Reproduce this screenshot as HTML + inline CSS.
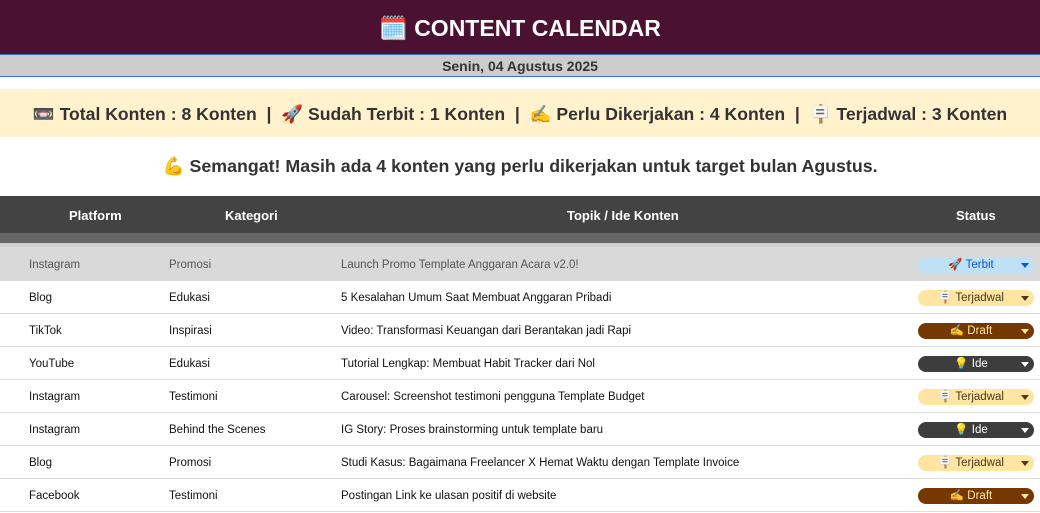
<!DOCTYPE html>
<html><head><meta charset="utf-8"><style>
*{margin:0;padding:0;box-sizing:border-box}
body{width:1040px;height:513px;overflow:hidden;background:#fff;font-family:"Liberation Sans","Noto Sans CJK JP",sans-serif;color:#222}
.hdr{height:55px;background:#4a1130;color:#fff;font-weight:bold;font-size:23px;text-align:center;line-height:56px;border-bottom:1px solid #3b6fd0}
.date{height:22px;background:#cccccc;border-bottom:1px solid #3b6fd0;text-align:center;font-weight:bold;font-size:14px;line-height:22px;color:#333}
.sum{position:absolute;top:89px;left:0;width:1040px;height:48px;background:#fff2cc;text-align:center;font-weight:bold;font-size:17.6px;line-height:50px;color:#333}
.mot{position:absolute;top:156px;width:1040px;text-align:center;font-weight:bold;font-size:17.8px;color:#333}
.th{position:absolute;top:196px;height:37px;width:1040px;background:#434343;color:#fff;font-weight:bold;font-size:13px}
.th span{position:absolute;top:12px}
.st1{position:absolute;top:233px;height:10px;width:1040px;background:#666}
.st2{position:absolute;top:243px;height:4px;width:1040px;background:#cfcfcf}
.row{position:absolute;left:0;width:1040px;height:33px;border-bottom:1px solid #ddd;font-size:11.5px;color:#111}
.row span{position:absolute;top:11px}
.b{position:absolute;left:918px;top:9px;width:116px;height:16px;border-radius:8px;font-size:11.5px;line-height:17px;text-align:center;padding-right:10px}
.b:after{content:"";position:absolute;right:5px;top:6px;border-left:4px solid transparent;border-right:4px solid transparent;border-top:5px solid currentColor}
.t{background:#bfe1f6;color:#0b57d0}.j{background:#ffe5a0;color:#473821}.d{background:#753800;color:#ffe5a0}.i{background:#3d3d3d;color:#fff}
</style></head><body>
<div class="hdr">🗓️ CONTENT CALENDAR</div>
<div class="date">Senin, 04 Agustus 2025</div>
<div class="sum">📼 Total Konten : 8 Konten &nbsp;|&nbsp; 🚀 Sudah Terbit : 1 Konten &nbsp;|&nbsp; ✍️ Perlu Dikerjakan : 4 Konten &nbsp;|&nbsp; 🪧 Terjadwal : 3 Konten</div>
<div class="mot">💪 Semangat! Masih ada 4 konten yang perlu dikerjakan untuk target bulan Agustus.</div>
<div class="th"><span style="left:69px">Platform</span><span style="left:225px">Kategori</span><span style="left:567px">Topik / Ide Konten</span><span style="left:956px">Status</span></div>
<div class="st1"></div><div class="st2"></div>
<div class="row" style="top:247px;height:34px;background:#d9d9d9;color:#555;border:none"><span style="left:29px;top:12px">Instagram</span><span style="left:169px;top:12px">Promosi</span><span style="left:341px;top:12px">Launch Promo Template Anggaran Acara v2.0!</span><div class="b t" style="top:10px">🚀 Terbit</div></div>
<div class="row" style="top:281px"><span style="left:29px">Blog</span><span style="left:169px">Edukasi</span><span style="left:341px">5 Kesalahan Umum Saat Membuat Anggaran Pribadi</span><div class="b j">🪧 Terjadwal</div></div>
<div class="row" style="top:314px"><span style="left:29px">TikTok</span><span style="left:169px">Inspirasi</span><span style="left:341px">Video: Transformasi Keuangan dari Berantakan jadi Rapi</span><div class="b d">✍️ Draft</div></div>
<div class="row" style="top:347px"><span style="left:29px">YouTube</span><span style="left:169px">Edukasi</span><span style="left:341px">Tutorial Lengkap: Membuat Habit Tracker dari Nol</span><div class="b i">💡 Ide</div></div>
<div class="row" style="top:380px"><span style="left:29px">Instagram</span><span style="left:169px">Testimoni</span><span style="left:341px">Carousel: Screenshot testimoni pengguna Template Budget</span><div class="b j">🪧 Terjadwal</div></div>
<div class="row" style="top:413px"><span style="left:29px">Instagram</span><span style="left:169px">Behind the Scenes</span><span style="left:341px">IG Story: Proses brainstorming untuk template baru</span><div class="b i">💡 Ide</div></div>
<div class="row" style="top:446px"><span style="left:29px">Blog</span><span style="left:169px">Promosi</span><span style="left:341px">Studi Kasus: Bagaimana Freelancer X Hemat Waktu dengan Template Invoice</span><div class="b j">🪧 Terjadwal</div></div>
<div class="row" style="top:479px"><span style="left:29px">Facebook</span><span style="left:169px">Testimoni</span><span style="left:341px">Postingan Link ke ulasan positif di website</span><div class="b d">✍️ Draft</div></div>
</body></html>
